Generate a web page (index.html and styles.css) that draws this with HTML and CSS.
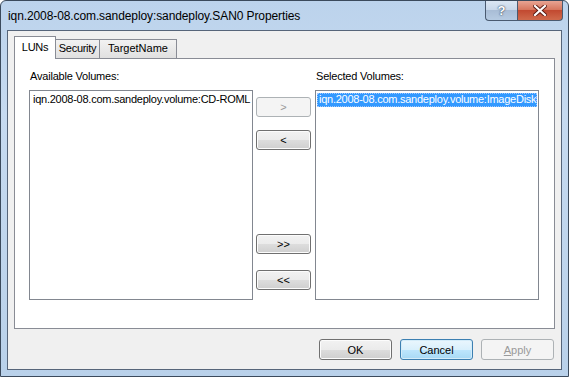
FILE: index.html
```html
<!DOCTYPE html>
<html lang="en">
    <head>
        <meta charset="UTF-8">
        <title>iqn.2008-08.com.sandeploy:sandeploy.SAN0 Properties</title>
        <link rel="stylesheet" href="styles.css">
    </head>
    <body>
        <div class="window">
            <div class="titlebar">
                <span class="title">iqn.2008-08.com.sandeploy:sandeploy.SAN0 Properties</span>
                <div class="caption">
                    <div class="cap help">?</div>
                    <div class="cap close">
                        <svg width="14" height="11" viewBox="0 0 14 11">
                            <path d="M2 1 L12 10 M12 1 L2 10" stroke="#5a1a12" stroke-width="4" stroke-linecap="square"/>
                            <path d="M2 1 L12 10 M12 1 L2 10" stroke="#fff" stroke-width="2.2" stroke-linecap="square"/>
                        </svg>
                    </div>
                </div>
            </div>
            <div class="client">
                <div class="tabs">
                    <div class="tab active">LUNs</div>
                    <div class="tab sec">Security</div>
                    <div class="tab target">TargetName</div>
                </div>
                <div class="panel">
                    <div class="volumes">
                        <div class="col">
                            <div class="label">Available Volumes:</div>
                            <div class="list">
                                <div class="item">iqn.2008-08.com.sandeploy.volume:CD-ROML</div>
                            </div>
                        </div>
                        <div class="moves">
                            <button class="btn small disabled first">&gt;</button>
                            <button class="btn small second">&lt;</button>
                            <button class="btn small third">&gt;&gt;</button>
                            <button class="btn small fourth">&lt;&lt;</button>
                        </div>
                        <div class="col">
                            <div class="label">Selected Volumes:</div>
                            <div class="list">
                                <div class="item selected">iqn.2008-08.com.sandeploy.volume:ImageDisk</div>
                            </div>
                        </div>
                    </div>
                </div>
                <div class="actions">
                    <button class="btn">OK</button>
                    <button class="btn default">Cancel</button>
                    <button class="btn disabled"><u>A</u>pply</button>
                </div>
            </div>
        </div>
    </body>
</html>
```
FILE: styles.css
```css
* {
    box-sizing: border-box;
}
body {
    margin: 0;
    font-family: "Liberation Sans", Arial, sans-serif;
    font-size: 11px;
    color: #000;
    background: #fff;
}
.window {
    width: 569px;
    height: 377px;
    display: flex;
    flex-direction: column;
    border: 1px solid #3b4a5c;
    border-radius: 6px 6px 0 0;
    background: linear-gradient(to bottom, #bcd3ec 0%, #c6daf0 30%, #b9d1ea 100%);
    padding: 0 6px 6px 6px;
}
.titlebar {
    height: 29px;
    display: flex;
    align-items: flex-start;
    justify-content: space-between;
}
.title {
    font-size: 12px;
    letter-spacing: -0.1px;
    margin-top: 8px;
    margin-left: 1px;
    color: #000;
}
.caption {
    display: flex;
    margin-right: -1px;
}
.cap {
    height: 20px;
    border: 1px solid #4a5a70;
    border-top: none;
    display: flex;
    align-items: center;
    justify-content: center;
}
.help {
    width: 32px;
    border-radius: 0 0 0 4px;
    border-right: none;
    background: linear-gradient(to bottom, #dbe6f3 0%, #c9d8ea 45%, #a9bdd6 50%, #b6cbe2 100%);
    color: #fff;
    font-weight: bold;
    font-size: 13px;
    text-shadow: 0 0 2px #33475f, 0 0 1px #33475f;
}
.close {
    width: 46px;
    border-radius: 0 0 4px 0;
    background: linear-gradient(to bottom, #e8a493 0%, #d7775f 45%, #c24a31 50%, #d06a4c 100%);
}
.client {
    flex: 1;
    border: 1px solid #56657a;
    background: #f0f0f0;
    display: flex;
    flex-direction: column;
    padding: 5px 6px 7px 6px;
}
.tabs {
    display: flex;
    align-items: flex-end;
    height: 22px;
}
.tab {
    height: 19px;
    border: 1px solid #898c95;
    border-bottom: none;
    border-left: none;
    background: linear-gradient(to bottom, #f2f2f2, #e0e0e0);
    padding-top: 2px;
    text-align: center;
    letter-spacing: -0.3px;
}
.tab.active {
    width: 42px;
    height: 23px;
    border-left: 1px solid #898c95;
    background: #fff;
    margin-bottom: -1px;
    padding-top: 4px;
    position: relative;
    z-index: 1;
}
.tab.sec {
    width: 44px;
}
.tab.target {
    width: 77px;
    letter-spacing: 0;
}
.panel {
    height: 271px;
    border: 1px solid #898c95;
    background: #fff;
    padding: 11px 0 0 14px;
}
.volumes {
    display: flex;
    gap: 3px;
}
.col {
    width: 224px;
    display: flex;
    flex-direction: column;
}
.col:last-child {
    margin-left: 1px;
}
.label {
    height: 20px;
    padding-left: 1px;
    letter-spacing: -0.2px;
}
.list {
    height: 210px;
    border: 1px solid #828790;
    padding: 2px 1px;
    overflow: hidden;
}
.item {
    white-space: nowrap;
    height: 14px;
    line-height: 13px;
    padding-left: 2px;
    letter-spacing: -0.25px;
    overflow: hidden;
}
.item.selected {
    background: #3399ff;
    color: #fff;
    outline: 1px dotted #a0c8ff;
    outline-offset: -1px;
}
.moves {
    width: 55px;
    display: flex;
    flex-direction: column;
    padding-top: 27px;
}
.btn {
    font-family: "Liberation Sans", Arial, sans-serif;
    font-size: 11px;
    color: #000;
    border: 1px solid #707070;
    border-radius: 3px;
    background: linear-gradient(to bottom, #f2f2f2 0%, #ebebeb 50%, #dddddd 51%, #cfcfcf 100%);
    box-shadow: inset 0 0 0 1px #fcfcfc;
    padding: 0;
    height: 21px;
    width: 73px;
}
.btn.small {
    width: 55px;
    height: 20px;
}
.btn.disabled {
    border-color: #adb2b5;
    background: #f4f4f4;
    color: #9a9a9a;
    box-shadow: none;
}
.btn.default {
    border-color: #3c7fb1;
    background: linear-gradient(to bottom, #eaf6fd 0%, #d9f0fc 50%, #bee6fd 51%, #a7d9f5 100%);
    box-shadow: inset 0 0 0 1px #d4ecf9;
}
.second {
    margin-top: 13px;
}
.third {
    margin-top: 84px;
}
.fourth {
    margin-top: 16px;
}
.actions {
    display: flex;
    justify-content: flex-end;
    gap: 8px;
    margin-top: 10px;
    padding-right: 1px;
}
```
